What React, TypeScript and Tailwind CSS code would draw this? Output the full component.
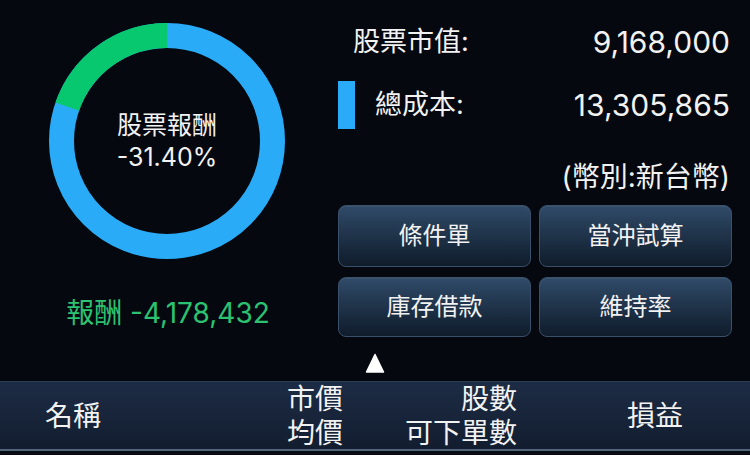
import React from "react";

const font = { fontFamily: '"Inter", "Noto Sans CJK TC", sans-serif' };

function Donut() {
  const r = 105.5;
  const c = 2 * Math.PI * r;
  const green = (71 / 360) * c;
  return (
    <div className="relative w-[236px] h-[236px]">
      <svg width="236" height="236" viewBox="0 0 236 236" className="absolute inset-0">
        <circle cx="118" cy="118" r={r} fill="none" stroke="#2aabf8" strokeWidth="25" />
        <circle
          cx="118"
          cy="118"
          r={r}
          fill="none"
          stroke="#07c86e"
          strokeWidth="25"
          strokeDasharray={`${green} ${c}`}
          transform="rotate(-161 118 118)"
        />
      </svg>
      <div className="absolute inset-0 flex flex-col items-center justify-center text-[#f2f2f2] text-[25px] leading-[32px]">
        <div>股票報酬</div>
        <div>-31.40%</div>
      </div>
    </div>
  );
}

function Btn({ label }: { label: string }) {
  return (
    <div className="flex-1 flex items-center justify-center rounded-[8px] border border-[#3a506a] bg-linear-to-b from-[#304b69] to-[#0f1c2b] text-[#f2f2f2] text-[24px] shadow-[inset_0_1px_0_rgba(255,255,255,0.06)]">
      {label}
    </div>
  );
}

export default function App() {
  return (
    <div style={font} className="w-[750px] h-[455px] bg-[#05080e] flex flex-col overflow-hidden">
      <div className="h-[381px] flex">
        <div className="w-[338px] flex flex-col items-center">
          <div className="mt-[23px] ml-[-4px]">
            <Donut />
          </div>
          <div className="mt-[38px] h-[32px] flex items-center text-[28px] text-[#2cc271] ml-[-2px]">
            報酬 -4,178,432
          </div>
        </div>
        <div className="w-[394px] flex flex-col">
          <div className="mt-[18px] h-[48px] flex items-center justify-between pl-[15px] pr-[2px] text-[27px] text-[#f2f2f2]">
            <span>股票市值:</span>
            <span className="text-[30px]">9,168,000</span>
          </div>
          <div className="mt-[15px] h-[48px] flex items-center pr-[2px] text-[27px] text-[#f2f2f2]">
            <div className="w-[17px] h-[48px] bg-[#2aabf8]" />
            <span className="ml-[20px]">總成本:</span>
            <span className="ml-auto text-[30px]">13,305,865</span>
          </div>
          <div className="mt-[31px] h-[34px] flex items-center justify-end pr-[2px] text-[28px] text-[#f2f2f2]">
            (幣別:新台幣)
          </div>
          <div className="mt-[11px] flex flex-col gap-[10px]">
            <div className="h-[62px] flex gap-[8px]">
              <Btn label="條件單" />
              <Btn label="當沖試算" />
            </div>
            <div className="h-[60px] flex gap-[8px]">
              <Btn label="庫存借款" />
              <Btn label="維持率" />
            </div>
          </div>
          <div className="flex-1 flex items-end pb-[8px] pl-[27px]">
            <svg width="20" height="20" viewBox="0 0 20 20">
              <path d="M10 1.5 L18.5 19 L1.5 19 Z" fill="#ffffff" stroke="#ffffff" strokeWidth="1.5" strokeLinejoin="round" />
            </svg>
          </div>
        </div>
      </div>
      <div className="h-[70px] flex items-center border-t border-[#2b3c55] border-b-2 border-b-[#51657b] bg-linear-to-b from-[#1d2c45] to-[#121d2f] text-[#f2f2f2] text-[28px]">
        <div className="pl-[45px] w-[287px]">名稱</div>
        <div className="w-[60px] flex flex-col leading-[34px]">
          <span>市價</span>
          <span>均價</span>
        </div>
        <div className="w-[170px] flex flex-col items-end leading-[34px]">
          <span>股數</span>
          <span>可下單數</span>
        </div>
        <div className="pl-[110px]">損益</div>
      </div>
      <div className="flex-1 bg-[#070b12]" />
    </div>
  );
}
